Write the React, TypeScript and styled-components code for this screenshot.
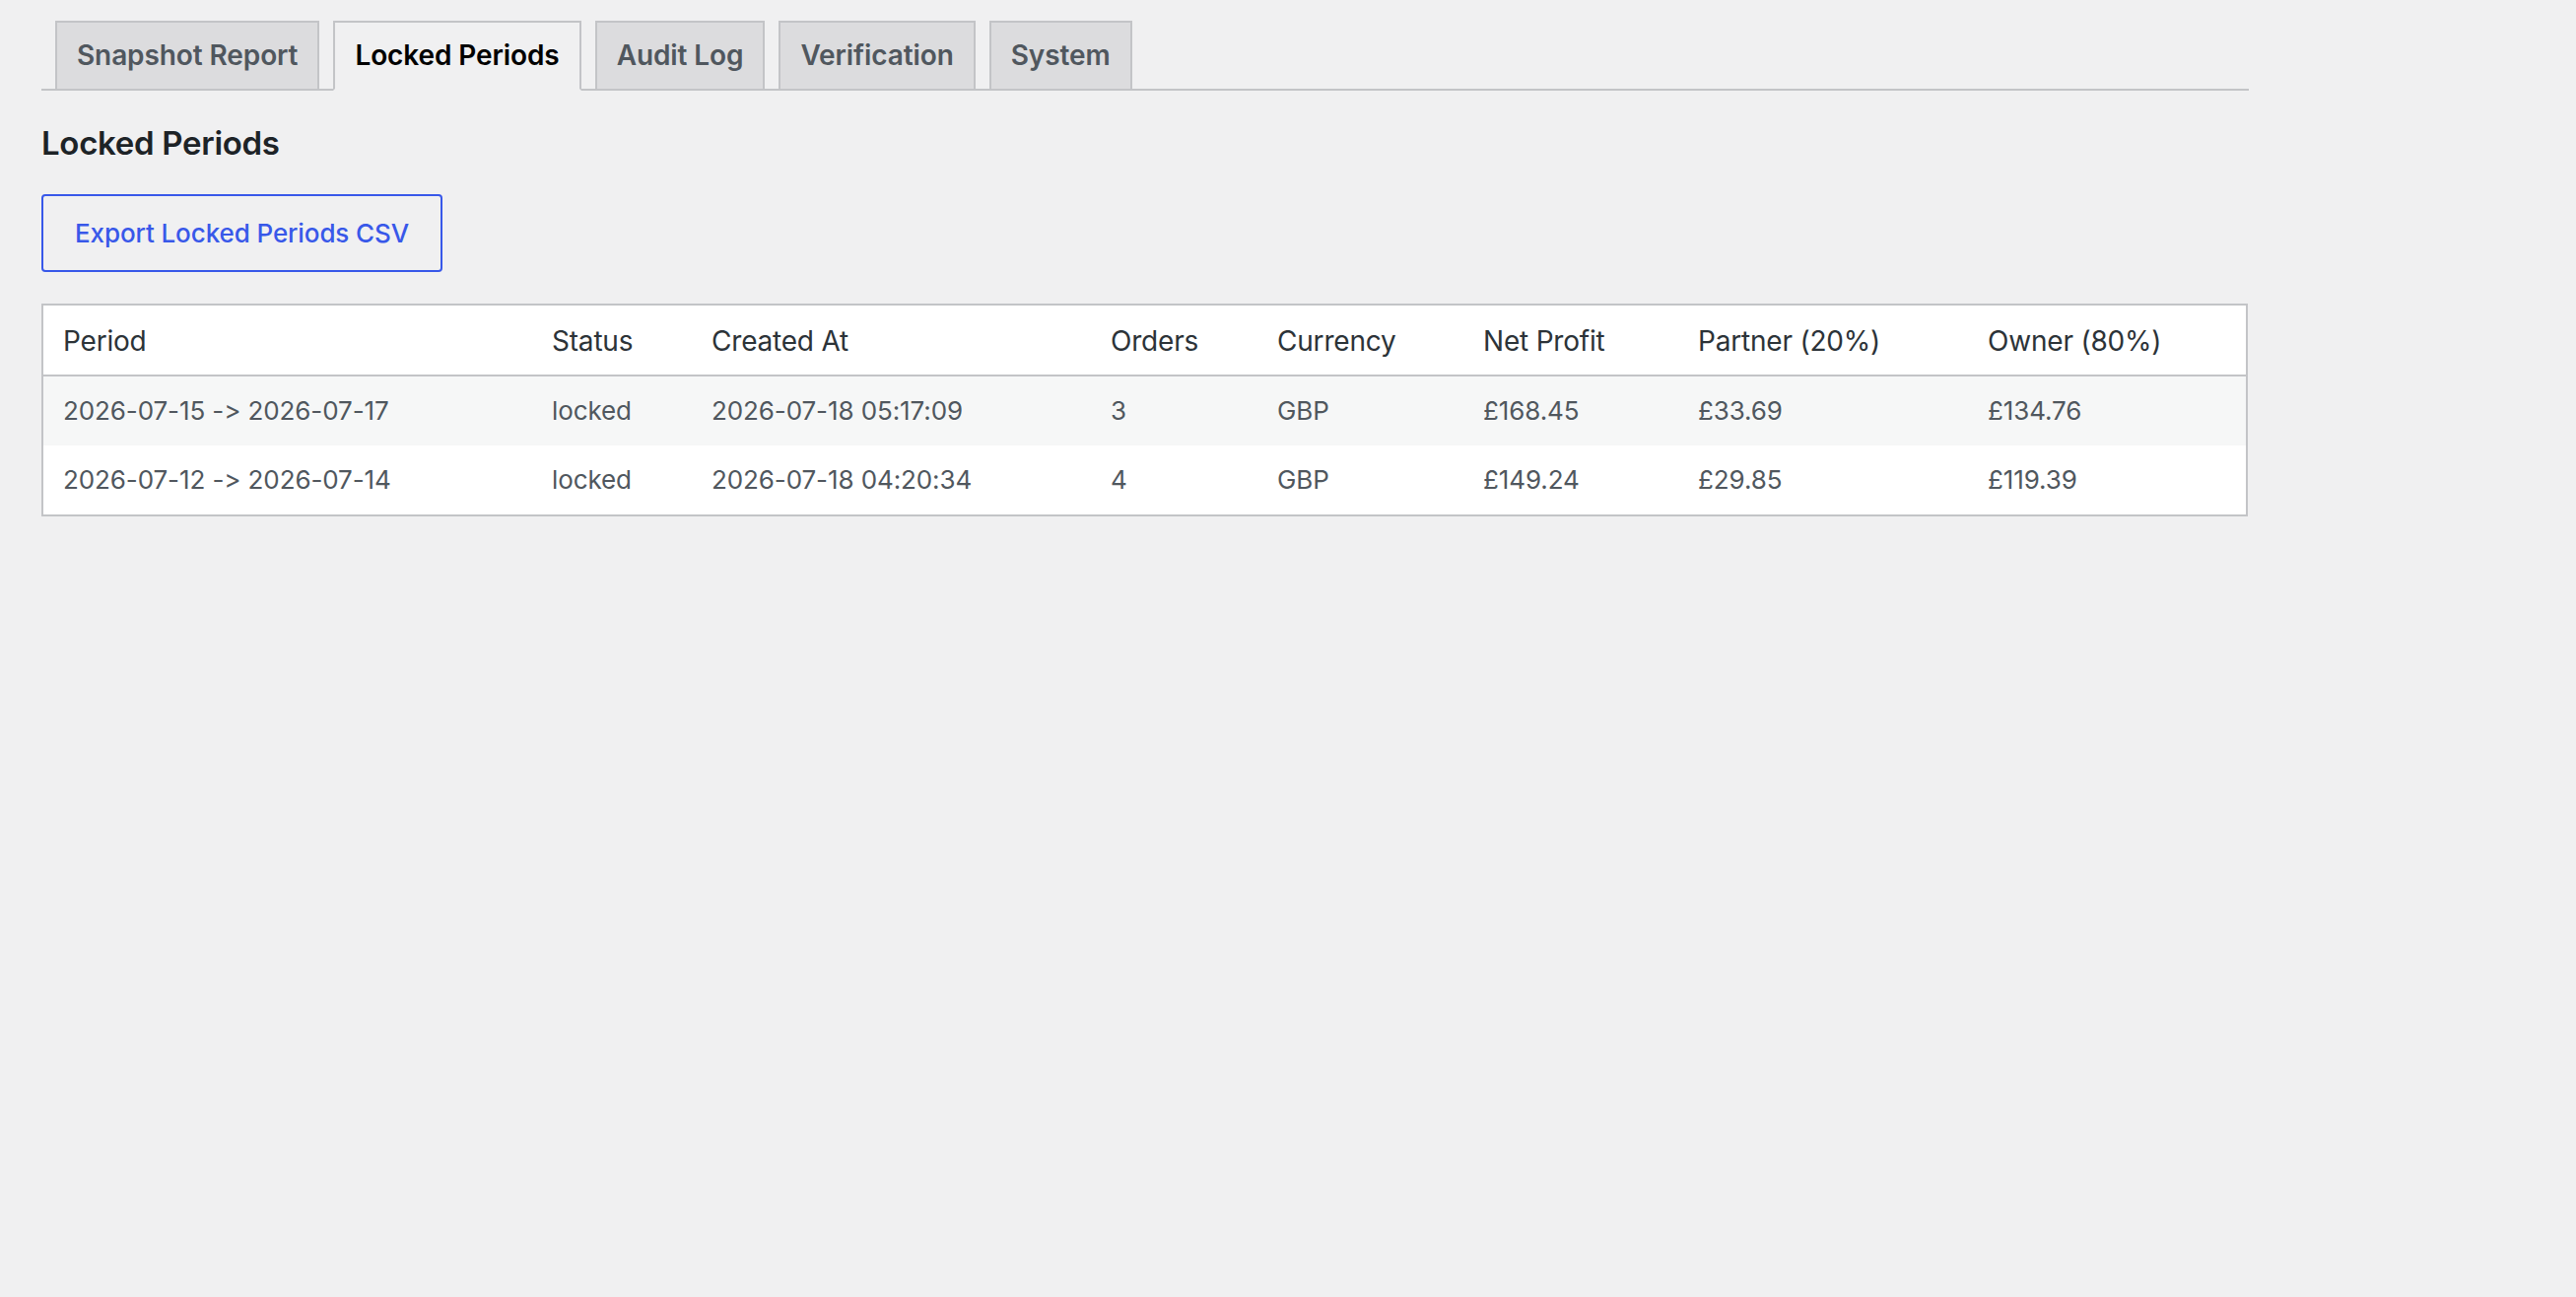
import styled, { createGlobalStyle } from "styled-components"

const GlobalStyle = createGlobalStyle`
  html, body {
    margin: 0;
    padding: 0;
    background: #f0f0f1;
    font-family: Inter, "Noto Sans", "Liberation Sans", sans-serif;
    color: #3c434a;
  }
`

const tabs = ["Snapshot Report", "Locked Periods", "Audit Log", "Verification", "System"]
const activeTab = "Locked Periods"

const columns = [
  { title: "Period", width: 496 },
  { title: "Status", width: 162 },
  { title: "Created At", width: 405 },
  { title: "Orders", width: 169 },
  { title: "Currency", width: 209 },
  { title: "Net Profit", width: 218 },
  { title: "Partner (20%)", width: 294 },
  { title: "Owner (80%)", width: 282 },
]

const rows = [
  ["2026-07-15 -> 2026-07-17", "locked", "2026-07-18 05:17:09", "3", "GBP", "£168.45", "£33.69", "£134.76"],
  ["2026-07-12 -> 2026-07-14", "locked", "2026-07-18 04:20:34", "4", "GBP", "£149.24", "£29.85", "£119.39"],
]

export default function App() {
  return (
    <>
      <GlobalStyle />
      <Wrap>
        <TabBar>
          {tabs.map((t) => (
            <Tab key={t} $active={t === activeTab}>
              {t}
            </Tab>
          ))}
        </TabBar>
        <Title>Locked Periods</Title>
        <ExportButton type="button">Export Locked Periods CSV</ExportButton>
        <Table>
          <colgroup>
            {columns.map((c) => (
              <col key={c.title} style={{ width: c.width }} />
            ))}
          </colgroup>
          <thead>
            <tr>
              {columns.map((c) => (
                <Th key={c.title}>{c.title}</Th>
              ))}
            </tr>
          </thead>
          <tbody>
            {rows.map((r, i) => (
              <Row key={i} $striped={i % 2 === 0}>
                {r.map((cell, j) => (
                  <Td key={j}>{cell}</Td>
                ))}
              </Row>
            ))}
          </tbody>
        </Table>
      </Wrap>
    </>
  )
}

const BorderColor = "#c3c4c7"
const AccentColor = "#3858e9"

const Wrap = styled.div`
  width: 2240px;
  margin-left: 42px;
  padding-top: 21px;
  display: flex;
  flex-direction: column;
  align-items: flex-start;
`

const TabBar = styled.nav`
  align-self: stretch;
  display: flex;
  gap: 14px;
  padding-left: 14px;
  border-bottom: 2px solid ${BorderColor};
`

const Tab = styled.a<{ $active: boolean }>`
  margin-bottom: -2px;
  padding: 10px 20px;
  line-height: 47px;
  font-size: 28px;
  font-weight: 600;
  letter-spacing: -0.1px;
  border: 2px solid ${BorderColor};
  border-bottom-color: ${(p) => (p.$active ? "#f0f0f1" : BorderColor)};
  background: ${(p) => (p.$active ? "#f0f0f1" : "#dcdcde")};
  color: ${(p) => (p.$active ? "#000" : "#50575e")};
  white-space: nowrap;
  cursor: pointer;
`

const Title = styled.h2`
  margin: 32px 0 30px;
  font-size: 33px;
  line-height: 1.3;
  font-weight: 600;
  letter-spacing: -0.3px;
  color: #1d2327;
`

const ExportButton = styled.button`
  height: 79px;
  padding: 0 32px;
  border: 2px solid ${AccentColor};
  border-radius: 4px;
  background: transparent;
  color: ${AccentColor};
  font-family: inherit;
  font-size: 26px;
  font-weight: 500;
  letter-spacing: -0.1px;
  cursor: pointer;
`

const Table = styled.table`
  margin-top: 32px;
  width: 2239px;
  table-layout: fixed;
  border-collapse: separate;
  border-spacing: 0;
  border: 2px solid ${BorderColor};
  background: #fff;
`

const Th = styled.th`
  padding: 2px 20px 0;
  height: 68px;
  text-align: left;
  font-size: 28px;
  font-weight: 400;
  letter-spacing: -0.2px;
  color: #2c3338;
  border-bottom: 2px solid ${BorderColor};
`

const Row = styled.tr<{ $striped: boolean }>`
  background: ${(p) => (p.$striped ? "#f6f7f7" : "#fff")};
`

const Td = styled.td`
  padding: 0 20px;
  height: 70px;
  font-size: 26px;
  letter-spacing: -0.1px;
  color: #50575e;
  white-space: nowrap;
`
